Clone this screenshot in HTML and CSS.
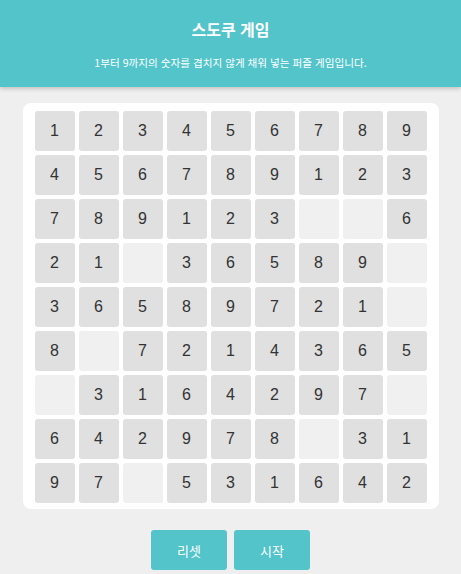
FILE: index.html
```html
<!DOCTYPE html>
<html lang="ko">
<head>
<meta charset="utf-8">
<title>스도쿠 게임</title>
<link rel="stylesheet" href="styles.css">
</head>
<body>
<header class="header">
  <h1 class="title">스도쿠 게임</h1>
  <p class="subtitle">1부터 9까지의 숫자를 겹치지 않게 채워 넣는 퍼즐 게임입니다.</p>
</header>
<main class="main">
  <div class="board" id="board"></div>
  <div class="controls">
    <button class="btn">리셋</button>
    <button class="btn">시작</button>
  </div>
</main>
<script src="script.js"></script>
</body>
</html>
```
FILE: styles.css
```css
html, body { margin: 0; padding: 0; }
body {
  background: #efefef;
  font-family: "Noto Sans CJK KR", "Liberation Sans", sans-serif;
  width: 461px;
  height: 574px;
  overflow: hidden;
}
.header {
  background: #52c4ca;
  height: 87px;
  box-shadow: 0 2px 4px rgba(0,0,0,0.18);
  color: #fff;
  text-align: center;
  box-sizing: border-box;
  padding-top: 17px;
}
.title {
  margin: 0;
  font-size: 16px;
  font-weight: bold;
  line-height: 24px;
}
.subtitle {
  margin: 15px 0 0;
  font-size: 10.6px;
  line-height: 14px;
}
.main {
  display: flex;
  flex-direction: column;
  align-items: center;
  padding-top: 16px;
}
.board {
  background: #fff;
  border-radius: 8px;
  padding: 8px 12px 6px;
  display: grid;
  grid-template-columns: repeat(9, 40px);
  grid-auto-rows: 40px;
  gap: 4px;
}
.cell {
  background: #e0e0e0;
  border-radius: 3px;
  display: flex;
  align-items: center;
  justify-content: center;
  font-family: "Liberation Sans", Arial, sans-serif;
  font-size: 16px;
  color: #333;
}
.cell.empty { background: #f0f0f0; }
.controls {
  display: flex;
  gap: 7px;
  margin-top: 21px;
}
.btn {
  width: 76px;
  height: 40px;
  border: none;
  border-radius: 3px;
  background: #52c4ca;
  color: #fff;
  font-family: "Noto Sans CJK KR", sans-serif;
  font-size: 13px;
}
```
FILE: script.js
```js
const grid = [
  "123456789",
  "456789123",
  "789123006",
  "210365890",
  "365897210",
  "807214365",
  "031642970",
  "642978031",
  "970531642"
];
const board = document.getElementById('board');
grid.forEach(row => {
  for (const ch of row) {
    const d = document.createElement('div');
    d.className = 'cell' + (ch === '0' ? ' empty' : '');
    d.textContent = ch === '0' ? '' : ch;
    board.appendChild(d);
  }
});
```
